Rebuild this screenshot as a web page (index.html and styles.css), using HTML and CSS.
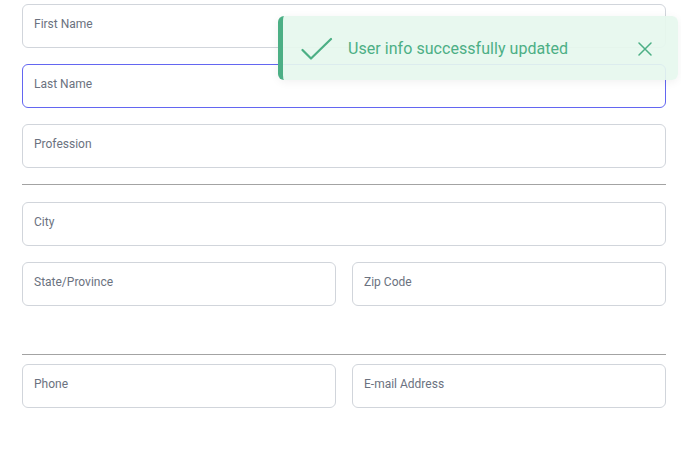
FILE: index.html
```html
<!DOCTYPE html>
<html>
<head>
<meta charset="utf-8">
<link rel="stylesheet" href="styles.css">
</head>
<body>
<form class="form">
  <div class="field">First Name</div>
  <div class="field focused">Last Name</div>
  <div class="field">Profession</div>
  <hr class="divider first">
  <div class="field">City</div>
  <div class="row">
    <div class="field">State/Province</div>
    <div class="field">Zip Code</div>
  </div>
  <hr class="divider second">
  <div class="row">
    <div class="field">Phone</div>
    <div class="field">E-mail Address</div>
  </div>
</form>
<div class="toast">
  <svg class="toast-check" width="32" height="24" viewBox="0 0 32 24" fill="none">
    <path d="M1.5 13 L10 21.5 L30 2" stroke="#4caf85" stroke-width="2.2" stroke-linecap="round" stroke-linejoin="round"/>
  </svg>
  <span class="toast-text">User info successfully updated</span>
  <svg class="toast-close" width="14" height="14" viewBox="0 0 14 14" fill="none">
    <path d="M1 1 L13 13 M13 1 L1 13" stroke="#4caf85" stroke-width="1.5" stroke-linecap="round"/>
  </svg>
</div>
</body>
</html>
```
FILE: styles.css
```css
html, body {
  margin: 0;
  padding: 0;
  background: #ffffff;
  font-family: Roboto, "Liberation Sans", sans-serif;
}
.form {
  display: flex;
  flex-direction: column;
  gap: 16px;
  width: 644px;
  padding: 4px 0 0 22px;
}
.field {
  box-sizing: border-box;
  height: 44px;
  flex: none;
  border: 1px solid #d1d5db;
  border-radius: 6px;
  padding: 12px 11px;
  font-size: 12px;
  line-height: 14px;
  color: #6b7280;
}
.row .field {
  flex: 1 1 0;
}
.field.focused {
  border-color: #6366f1;
}
.row {
  display: flex;
  gap: 16px;
}
.divider {
  border: 0;
  border-top: 1px solid #a3a3a3;
  margin: 0;
  height: 0;
}
.divider.first {
  margin-bottom: 1px;
}
.divider.second {
  margin-top: 32px;
  margin-bottom: -7px;
}
.toast {
  position: absolute;
  top: 16px;
  left: 278px;
  width: 400px;
  height: 64px;
  box-sizing: border-box;
  border-left: 5px solid #4caf85;
  border-radius: 6px;
  background: rgba(230, 247, 238, 0.92);
  box-shadow: 0 2px 10px rgba(0, 0, 0, 0.06);
  display: flex;
  align-items: center;
  padding: 1px 26px 0 18px;
}
.toast-check {
  flex: none;
  margin-right: 15px;
}
.toast-text {
  flex: 1;
  font-size: 16px;
  letter-spacing: 0.05px;
  color: #4caf85;
}
.toast-close {
  flex: none;
}
```
